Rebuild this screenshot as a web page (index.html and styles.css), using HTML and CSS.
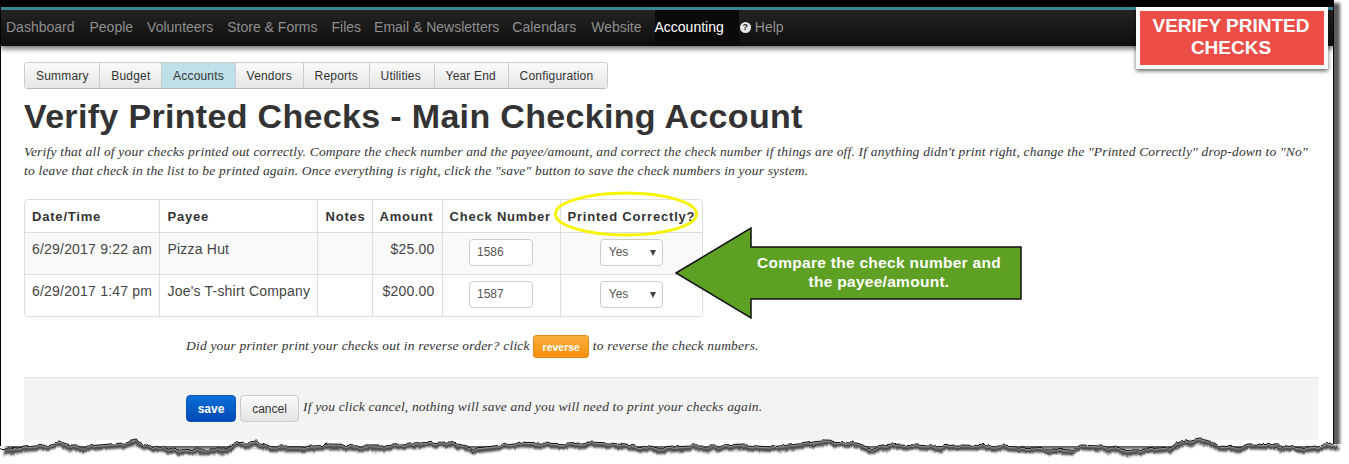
FILE: index.html
```html
<!DOCTYPE html>
<html lang="en">
<head>
<meta charset="utf-8">
<title>Verify Printed Checks</title>
<link rel="stylesheet" href="styles.css">
</head>
<body>
<div class="window">
  <nav class="topnav">
    <a class="nav-item nav-wide">Dashboard</a>
    <a class="nav-item">People</a>
    <a class="nav-item">Volunteers</a>
    <a class="nav-item">Store &amp; Forms</a>
    <a class="nav-item nav-tight">Files</a>
    <a class="nav-item nav-tight">Email &amp; Newsletters</a>
    <a class="nav-item nav-wide">Calendars</a>
    <a class="nav-item nav-tight">Website</a>
    <a class="nav-item nav-active">Accounting</a>
    <a class="nav-item nav-help"><span class="help-icon">?</span>Help</a>
  </nav>
  <main class="content">
    <div class="tabs">
      <a class="tab">Summary</a>
      <a class="tab">Budget</a>
      <a class="tab tab-active">Accounts</a>
      <a class="tab">Vendors</a>
      <a class="tab">Reports</a>
      <a class="tab">Utilities</a>
      <a class="tab">Year End</a>
      <a class="tab">Configuration</a>
    </div>
    <h1 class="title">Verify Printed Checks - Main Checking Account</h1>
    <p class="intro">Verify that all of your checks printed out correctly. Compare the check number and the payee/amount, and correct the check number if things are off. If anything didn't print right, change the "Printed Correctly" drop-down to "No"<br>to leave that check in the list to be printed again. Once everything is right, click the "save" button to save the check numbers in your system.</p>
    <div class="table-wrap">
      <table class="checks">
        <thead>
          <tr>
            <th class="c-date">Date/Time</th>
            <th class="c-payee">Payee</th>
            <th class="c-notes">Notes</th>
            <th class="c-amount">Amount</th>
            <th class="c-number">Check Number</th>
            <th class="c-printed">Printed Correctly?</th>
          </tr>
        </thead>
        <tbody>
          <tr class="row-odd">
            <td>6/29/2017 9:22 am</td>
            <td>Pizza Hut</td>
            <td></td>
            <td class="money">$25.00</td>
            <td class="center"><input class="field" type="text" value="1586"></td>
            <td class="center"><span class="select-box"><select class="field-select"><option>Yes</option><option>No</option></select></span></td>
          </tr>
          <tr>
            <td>6/29/2017 1:47 pm</td>
            <td>Joe's T-shirt Company</td>
            <td></td>
            <td class="money">$200.00</td>
            <td class="center"><input class="field" type="text" value="1587"></td>
            <td class="center"><span class="select-box"><select class="field-select"><option>Yes</option><option>No</option></select></span></td>
          </tr>
        </tbody>
      </table>
    </div>
    <p class="reverse-line">Did your printer print your checks out in reverse order? click <button class="btn btn-orange" type="button">reverse</button> to reverse the check numbers.</p>
    <div class="actions">
      <button class="btn-lg btn-blue" type="button">save</button>
      <button class="btn-lg btn-grey" type="button">cancel</button>
      <span class="actions-note">If you click cancel, nothing will save and you will need to print your checks again.</span>
    </div>
  </main>
</div>

<div class="callout">VERIFY PRINTED<br>CHECKS</div>

<svg class="ellipse" width="150" height="50" viewBox="0 0 150 50" aria-hidden="true">
  <ellipse cx="75" cy="25" rx="70.5" ry="21" fill="none" stroke="#f8f400" stroke-width="3"/>
</svg>

<div class="arrow">
  <svg class="arrow-shape" width="350" height="94" viewBox="0 0 350 94" aria-hidden="true">
    <path d="M1 46 L76 1 L76 20 L346 20 L346 72 L76 72 L76 91 Z" fill="#5ea024" stroke="#111" stroke-width="1.5"/>
  </svg>
  <div class="arrow-text">Compare the check number and<br>the payee/amount.</div>
</div>

<svg class="torn" width="1349" height="34" viewBox="0 430 1349 34" aria-hidden="true">
  <defs>
    <filter id="blur" filterUnits="userSpaceOnUse" x="-20" y="420" width="1400" height="50"><feGaussianBlur stdDeviation="1.2"/></filter>
    <filter id="rough" filterUnits="userSpaceOnUse" x="-20" y="420" width="1400" height="50">
      <feTurbulence type="fractalNoise" baseFrequency="0.09 0.02" numOctaves="3" seed="4"/>
      <feDisplacementMap in="SourceGraphic" scale="7" xChannelSelector="R" yChannelSelector="G"/>
    </filter>
  </defs>
  <g filter="url(#rough)">
    <path d="M-10 447 L10 448 L25 446 L45 444 L60 441 L70 445 L90 445 L110 443 L125 442 L135 439 L145 444 L165 447 L180 449 L200 448 L225 448 L235 443 L258 441 L272 446 L300 446 L330 444 L360 445 L385 445 L410 442 L450 441 L462 444 L475 447 L495 445 L520 441 L540 442 L570 443 L590 441 L610 442 L635 445 L660 447 L690 445 L720 445 L745 444 L770 446 L790 444 L823 440 L853 441 L870 447 L900 443 L930 445 L960 444 L1000 445 L1050 448 L1070 449 L1080 444 L1100 445 L1120 448 L1135 449 L1170 446 L1180 442 L1200 438 L1210 440 L1218 445 L1240 446 L1250 443 L1280 444 L1300 447 L1333 443 L1360 443 L1360 480 L-10 480 Z" fill="#fff"/>
    <path d="M3 450 L10 451 L25 449 L45 447 L60 444 L70 448 L90 448 L110 446 L125 445 L135 442 L145 447 L165 450 L180 452 L200 451 L225 451 L235 446 L258 444 L272 449 L300 449 L330 447 L360 448 L385 448 L410 445 L450 444 L462 447 L475 450 L495 448 L520 444 L540 445 L570 446 L590 444 L610 445 L635 448 L660 450 L690 448 L720 448 L745 447 L770 449 L790 447 L823 443 L853 444 L870 450 L900 446 L930 448 L960 447 L1000 448 L1050 451 L1070 452 L1080 447 L1100 448 L1120 451 L1135 452 L1170 449 L1180 445 L1200 441 L1210 443 L1218 448 L1240 449 L1250 446 L1280 447 L1300 450 L1338 446" fill="none" stroke="#4a4a4a" stroke-width="4.5" filter="url(#blur)"/>
    <path d="M-10 447 L10 448 L25 446 L45 444 L60 441 L70 445 L90 445 L110 443 L125 442 L135 439 L145 444 L165 447 L180 449 L200 448 L225 448 L235 443 L258 441 L272 446 L300 446 L330 444 L360 445 L385 445 L410 442 L450 441 L462 444 L475 447 L495 445 L520 441 L540 442 L570 443 L590 441 L610 442 L635 445 L660 447 L690 445 L720 445 L745 444 L770 446 L790 444 L823 440 L853 441 L870 447 L900 443 L930 445 L960 444 L1000 445 L1050 448 L1070 449 L1080 444 L1100 445 L1120 448 L1135 449 L1170 446 L1180 442 L1200 438 L1210 440 L1218 445 L1240 446 L1250 443 L1280 444 L1300 447 L1333 443" fill="none" stroke="#111" stroke-width="1"/>
  </g>
</svg>
</body>
</html>
```

FILE: styles.css
```css
* { box-sizing: border-box; }
html, body { margin: 0; padding: 0; height: 464px; overflow: hidden; background: #fff; }
body { font-family: "Liberation Sans", Arial, sans-serif; color: #333; position: relative; }

.window {
  width: 1334px;
  height: 446px;
  border-top: 7px solid #000;
  border-left: 1px solid #000;
  border-right: 1px solid #000;
  box-shadow: 6px 3px 3px #5c5c5c;
  background: #fff;
  overflow: hidden;
}

.topnav {
  display: flex;
  height: 39px;
  padding-left: 5px;
  padding-bottom: 2px;
  border-top: 3px solid #3a8797;
  background: linear-gradient(#232323, #0e0e0e);
  box-shadow: 0 3px 5px rgba(0, 0, 0, .55);
  position: relative;
}
.nav-item {
  display: flex;
  align-items: center;
  padding-right: 14px;
  font-size: 14px;
  color: #8f8f8f;
}
.nav-wide { padding-right: 15px; }
.nav-tight { padding-right: 13px; }
.nav-active { color: #fff; background: #0a0a0a; margin-bottom: -2px; padding-bottom: 2px; padding-right: 15px; }
.nav-help { padding-left: 1px; }
.help-icon {
  width: 11px;
  height: 11px;
  margin-right: 4px;
  border-radius: 50%;
  background: #e8e8e8;
  color: #222;
  font-size: 9px;
  font-weight: 700;
  line-height: 11px;
  text-align: center;
}

.content { padding: 16px 15px 0 23px; }

.tabs {
  display: inline-flex;
  height: 27px;
  border: 1px solid #ccc;
  border-bottom-color: #bbb;
  border-radius: 4px;
  overflow: hidden;
  vertical-align: top;
}
.tab {
  display: flex;
  align-items: center;
  padding: 0 10.7px 0 11px;
  font-size: 12px;
  letter-spacing: .18px;
  color: #333;
  border-right: 1px solid #ccc;
  background: linear-gradient(#fafafa, #e6e6e6);
}
.tab:nth-child(6) { padding-right: 12.7px; }
.tab:nth-child(7) { padding-right: 11.7px; }
.tab:last-child { border-right: 0; padding-right: 13.5px; }
.tab-active { background: #bfe0e9; }

.title {
  margin: 7px 0 0;
  font-size: 34px;
  line-height: 40px;
  font-weight: 700;
  color: #333;
  letter-spacing: .33px;
}

.intro {
  margin: 6px 0 0;
  font-family: "Liberation Serif", Georgia, serif;
  font-style: italic;
  font-size: 13.5px;
  line-height: 19px;
  letter-spacing: .19px;
  white-space: nowrap;
}

.table-wrap {
  width: 679px;
  margin-top: 19px;
  border: 1px solid #ddd;
  border-radius: 4px;
  overflow: hidden;
}
.checks {
  width: 100%;
  border-collapse: collapse;
  table-layout: fixed;
  font-size: 14px;
  letter-spacing: .2px;
}
.checks th, .checks td { border-left: 1px solid #ddd; vertical-align: top; }
.checks th:first-child, .checks td:first-child { border-left: 0; }
.checks th {
  height: 32px;
  padding: 9px 6px 0 8px;
  text-align: left;
  font-size: 13px;
  font-weight: 700;
  letter-spacing: .8px;
  white-space: nowrap;
  color: #333;
}
.checks td {
  height: 42px;
  padding: 8px 6px 0 8px;
  border-top: 1px solid #ddd;
  white-space: nowrap;
  color: #444;
}
.checks th:first-child, .checks td:first-child { padding-left: 7px; }
.checks .c-amount, .checks .c-number, .checks .c-printed { padding-left: 7px; }
.row-odd td { background: #f9f9f9; }
.c-date { width: 134px; }
.c-payee { width: 158px; }
.c-notes { width: 55px; }
.c-amount { width: 70px; }
.c-number { width: 118px; }
.checks td.money { text-align: right; padding-right: 7px; }
.checks td.center { text-align: center; padding: 6px 7px 0; }

.field {
  width: 64px;
  height: 27px;
  padding: 0 7px;
  border: 1px solid #ccc;
  border-radius: 4px;
  background: #fff;
  font: 12px "Liberation Sans", Arial, sans-serif;
  color: #555;
}
.select-box { display: inline-block; position: relative; vertical-align: top; }
.select-box::after {
  content: "";
  position: absolute;
  right: 7px;
  top: 11px;
  border-left: 3px solid transparent;
  border-right: 3px solid transparent;
  border-top: 6px solid #444;
}
.field-select {
  display: block;
  width: 63px;
  height: 27px;
  padding: 0 8px;
  border: 1px solid #ccc;
  border-radius: 4px;
  background: #fff;
  font: 12px "Liberation Sans", Arial, sans-serif;
  color: #555;
  appearance: none;
}

.reverse-line {
  margin: 18px 0 0 162px;
  height: 23px;
  line-height: 22px;
  font-family: "Liberation Serif", Georgia, serif;
  font-style: italic;
  font-size: 13.5px;
  letter-spacing: .19px;
  white-space: nowrap;
}
.btn {
  width: 56px;
  height: 23px;
  margin: 0;
  padding: 0;
  border: 1px solid #e8891a;
  border-radius: 3px;
  background: linear-gradient(#fbae3c, #f5900f);
  color: #fff;
  font: 700 10.5px "Liberation Sans", Arial, sans-serif;
  vertical-align: top;
}

.actions {
  display: flex;
  align-items: center;
  height: 63px;
  margin-top: 19px;
  padding: 0 0 1px 162px;
  border-top: 1px solid #e3e3e3;
  background: #f3f3f3;
  width: 1294px;
}
.btn-lg {
  height: 27px;
  padding: 0;
  border-radius: 4px;
  font: 12px "Liberation Sans", Arial, sans-serif;
}
.btn-blue {
  width: 50px;
  border: 1px solid #0a57b8;
  background: linear-gradient(#0a6fd6, #0049b5);
  color: #fff;
  font-weight: 700;
}
.btn-grey {
  width: 59px;
  margin-left: 4px;
  border: 1px solid #ccc;
  background: linear-gradient(#fafafa, #e4e4e4);
  color: #333;
}
.actions-note {
  margin-left: 4px;
  margin-top: -3px;
  font-family: "Liberation Serif", Georgia, serif;
  font-style: italic;
  font-size: 13.5px;
  letter-spacing: .17px;
  white-space: nowrap;
}

.callout {
  position: absolute;
  left: 1136px;
  top: 7px;
  width: 192px;
  height: 62px;
  border: 4px solid #fff;
  background: #ec4e47;
  box-shadow: 0 2px 4px rgba(0, 0, 0, .6);
  color: #fff;
  font-size: 19px;
  font-weight: 700;
  line-height: 22px;
  padding: 4px 2px 0 0;
  text-align: center;
}

.ellipse { position: absolute; left: 551px; top: 189px; }

.arrow { position: absolute; left: 675px; top: 227px; width: 350px; height: 94px; }
.arrow-shape { display: block; }
.arrow-text {
  position: absolute;
  left: 70px;
  top: 26px;
  width: 268px;
  color: #fff;
  font-size: 15.5px;
  font-weight: 700;
  letter-spacing: .28px;
  line-height: 19px;
  text-align: center;
}

.torn { position: absolute; left: 0; top: 431px; display: block; }
```
